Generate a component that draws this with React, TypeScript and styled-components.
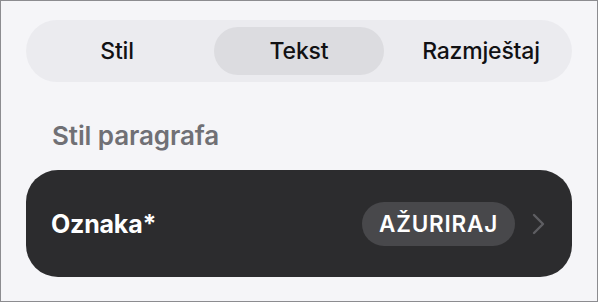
import React from "react";
import styled, { createGlobalStyle } from "styled-components";

const Global = createGlobalStyle`
  html, body { margin: 0; padding: 0; background: #ffffff; }
  body { font-family: Inter, "Noto Sans", sans-serif; -webkit-font-smoothing: antialiased; }
`;

const Frame = styled.div`
  box-sizing: border-box;
  width: 598px;
  height: 302px;
  border: 1px solid #8c8c90;
  background: #f5f5f8;
  padding: 19px 25px 0 25px;
  display: flex;
  flex-direction: column;
`;

const Segmented = styled.div`
  display: grid;
  grid-template-columns: repeat(3, 1fr);
  height: 62px;
  border-radius: 31px;
  background: #ebebef;
`;

const Segment = styled.div`
  padding: 7px 6px;
  display: flex;
`;

const SegmentInner = styled.div<{ $active?: boolean }>`
  flex: 1;
  display: flex;
  align-items: center;
  justify-content: center;
  border-radius: 24px;
  background: ${(p) => (p.$active ? "#dcdce0" : "transparent")};
  font-size: 23px;
  font-weight: 500;
  color: #111113;
  letter-spacing: -0.2px;
`;

const SectionTitle = styled.div`
  margin: 38px 0 0 26px;
  height: 32px;
  line-height: 32px;
  font-size: 26px;
  font-weight: 600;
  color: #707075;
  letter-spacing: -0.1px;
`;

const Card = styled.div`
  margin-top: 18px;
  height: 107px;
  border-radius: 32px;
  background: #2c2c2e;
  display: flex;
  align-items: center;
  padding: 0 26px 0 25px;
`;

const CardLabel = styled.div`
  flex: 1;
  font-size: 25px;
  font-weight: 700;
  color: #ffffff;
  letter-spacing: -0.2px;
`;

const UpdatePill = styled.div`
  height: 44px;
  padding: 0 17px;
  border-radius: 22px;
  background: #48484b;
  display: flex;
  align-items: center;
  font-size: 22.5px;
  font-weight: 600;
  color: #ffffff;
  letter-spacing: 0.8px;
`;

const Chevron = styled.svg`
  margin-left: 16px;
  width: 15px;
  height: 22px;
`;

export default function App() {
  const tabs = ["Stil", "Tekst", "Razmještaj"];
  return (
    <>
      <Global />
      <Frame>
        <Segmented>
          {tabs.map((t) => (
            <Segment key={t}>
              <SegmentInner $active={t === "Tekst"}>{t}</SegmentInner>
            </Segment>
          ))}
        </Segmented>
        <SectionTitle>Stil paragrafa</SectionTitle>
        <Card>
          <CardLabel>Oznaka*</CardLabel>
          <UpdatePill>AŽURIRAJ</UpdatePill>
          <Chevron viewBox="0 0 15 22">
            <path d="M3 2 L12 11 L3 20" fill="none" stroke="#5e5e62" strokeWidth="2.4" strokeLinecap="round" strokeLinejoin="round" />
          </Chevron>
        </Card>
      </Frame>
    </>
  );
}
